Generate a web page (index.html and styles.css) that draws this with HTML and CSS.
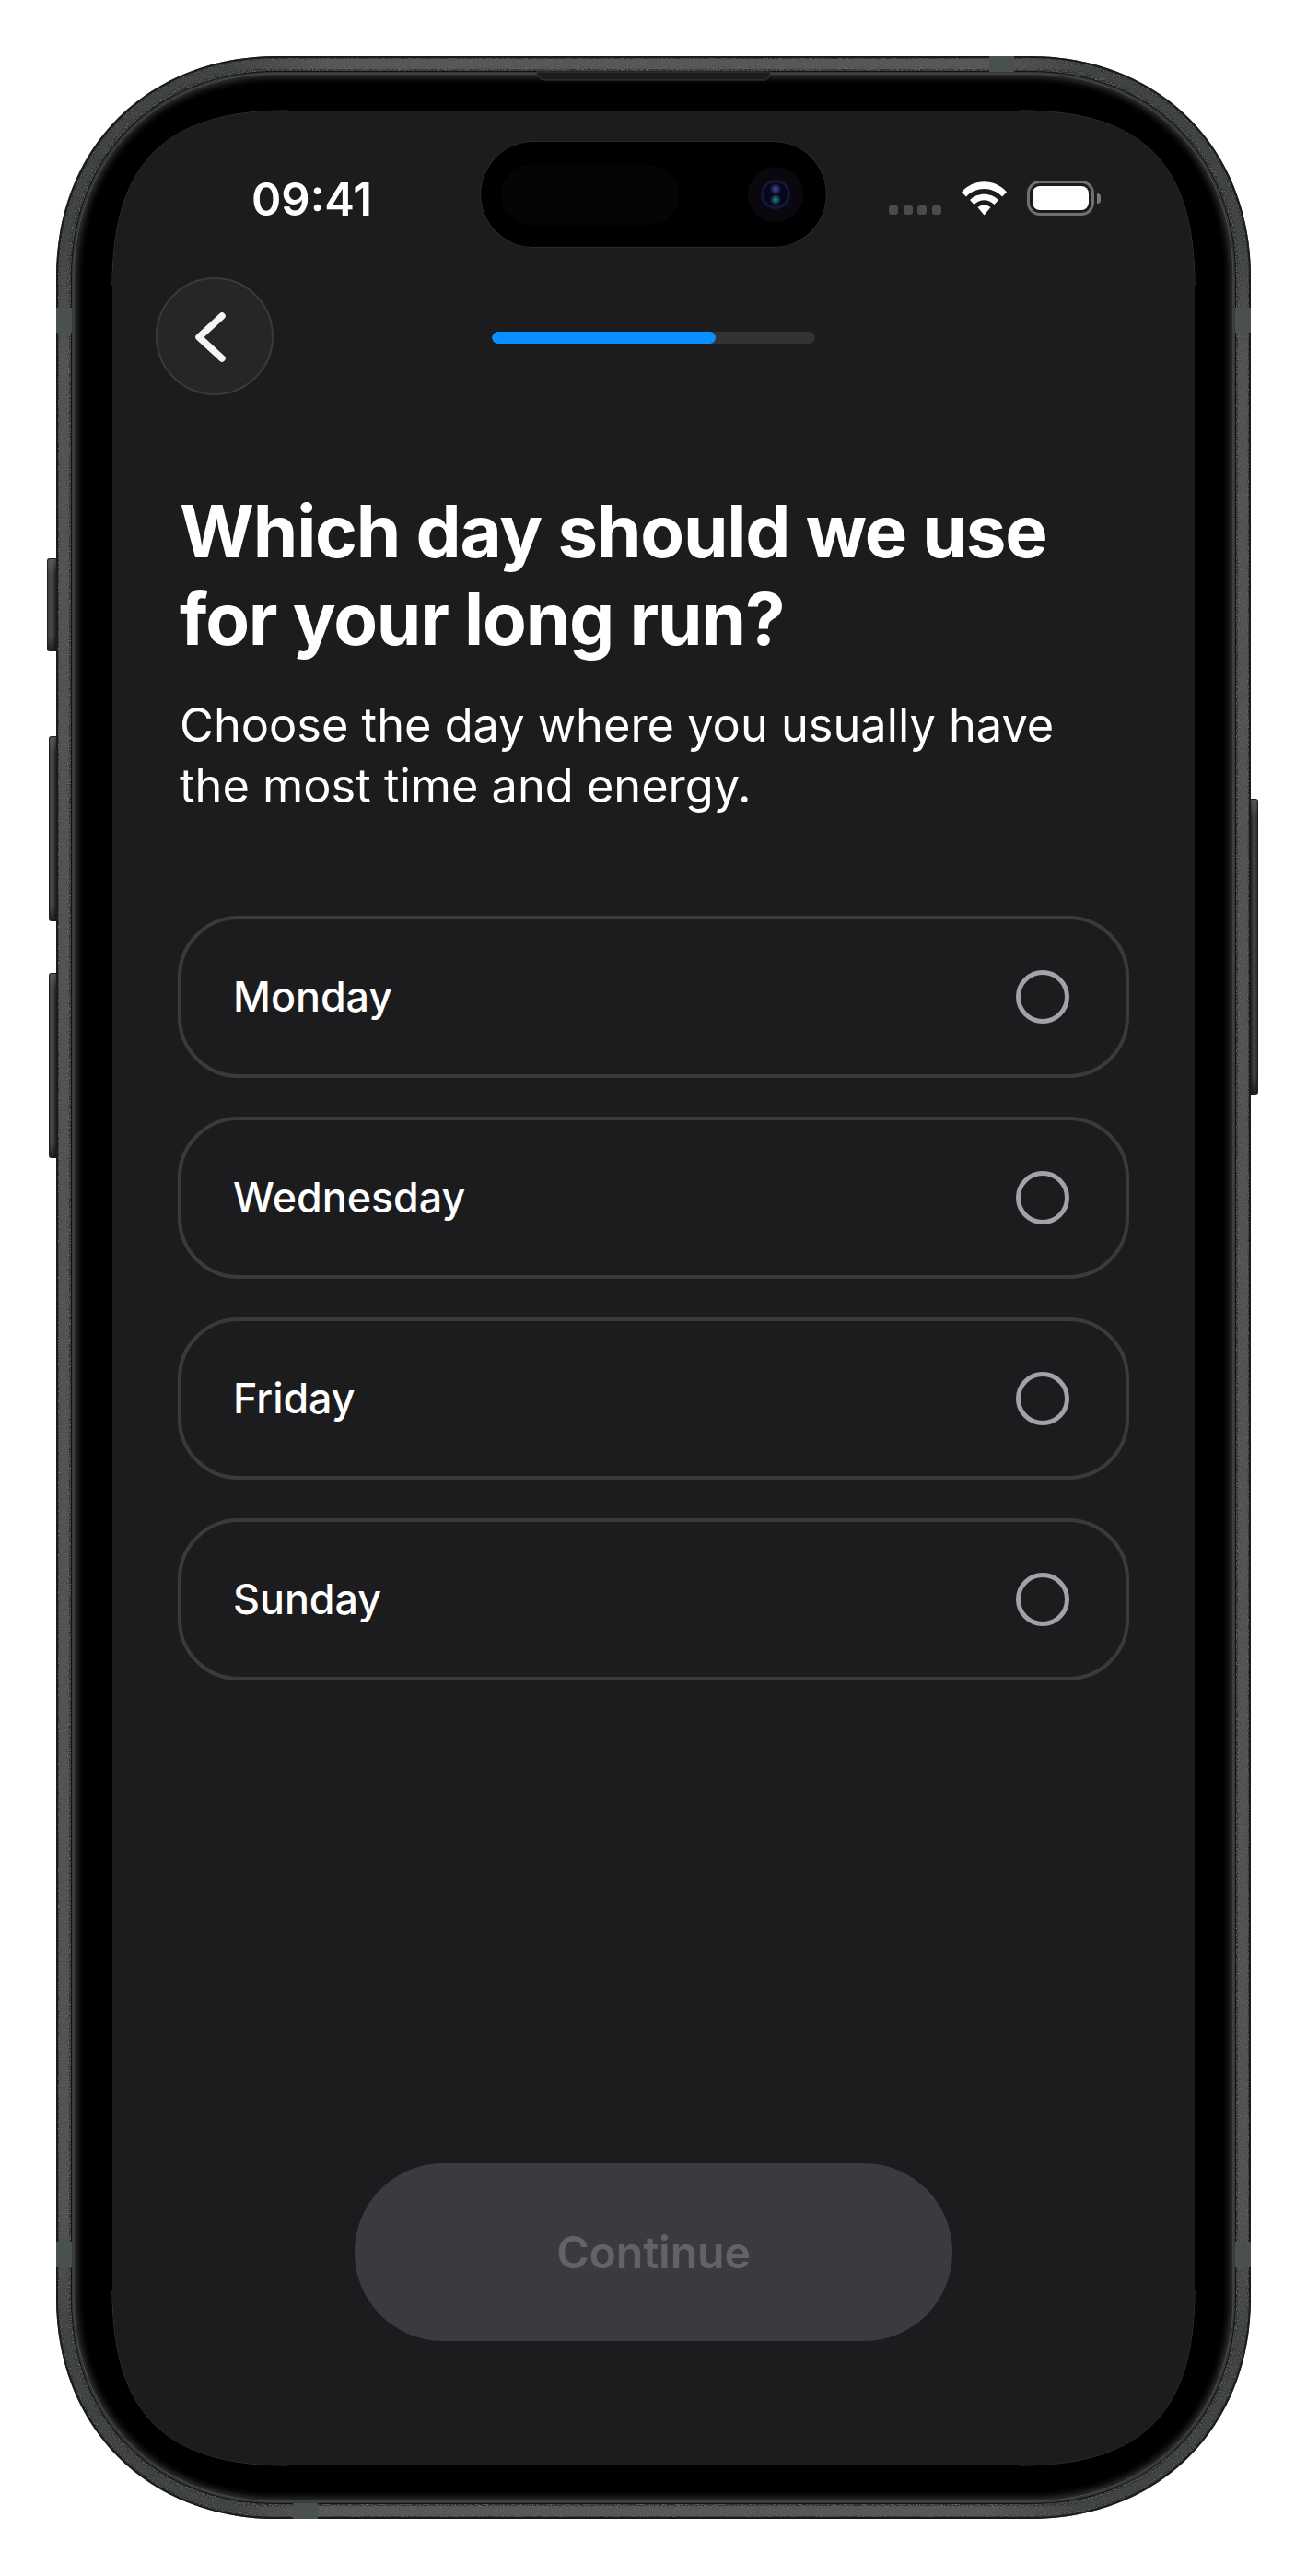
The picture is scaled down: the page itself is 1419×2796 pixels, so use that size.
FILE: index.html
```html
<!DOCTYPE html>
<html lang="en">
<head>
<meta charset="utf-8">
<title>Long run day</title>
<link rel="stylesheet" href="styles.css">
</head>
<body>
<div class="phone">
  <span class="side side-action"></span>
  <span class="side side-up"></span>
  <span class="side side-down"></span>
  <span class="side side-power"></span>
  <svg class="body-art" width="1297" height="2673" viewBox="0 0 1297 2673" aria-hidden="true">
    <defs>
      <filter id="grain" x="0" y="0" width="100%" height="100%" color-interpolation-filters="sRGB">
        <feTurbulence type="fractalNoise" baseFrequency="0.75" numOctaves="2" seed="7" result="n"/>
        <feColorMatrix in="n" type="matrix" values="0 0 0 0 1  0 0 0 0 1  0 0 0 0 1  0.9 0 0 0 -0.36" result="w"/>
        <feComposite in="w" in2="SourceAlpha" operator="in" result="g"/>
        <feMerge><feMergeNode in="SourceGraphic"/><feMergeNode in="g"/></feMerge>
      </filter>
      <filter id="soft" x="-2%" y="-2%" width="104%" height="104%"><feGaussianBlur stdDeviation="5"/></filter>
      <filter id="soft-band" x="-2%" y="-2%" width="104%" height="104%"><feGaussianBlur stdDeviation="2.500"/></filter>
      <clipPath id="inner-clip"><path d="M17,240 C17,108 108,17 240,17 H1057 C1189,17 1280,108 1280,240 V2433 C1280,2565 1189,2656 1057,2656 H240 C108,2656 17,2565 17,2433 Z"/></clipPath>
      <clipPath id="band-clip"><path clip-rule="evenodd" d="M0,240 C0,99 99,0 240,0 H1057 C1198,0 1297,99 1297,240 V2433 C1297,2574 1198,2673 1057,2673 H240 C99,2673 0,2574 0,2433 Z M17,240 C17,108 108,17 240,17 H1057 C1189,17 1280,108 1280,240 V2433 C1280,2565 1189,2656 1057,2656 H240 C108,2656 17,2565 17,2433 Z"/></clipPath>
      <linearGradient id="sheen-h" x1="0" x2="1" y1="0" y2="0">
        <stop offset="0" stop-color="#6c6c6c" stop-opacity="0"/><stop offset=".12" stop-color="#6c6c6c" stop-opacity=".5"/><stop offset=".88" stop-color="#6c6c6c" stop-opacity=".5"/><stop offset="1" stop-color="#6c6c6c" stop-opacity="0"/>
      </linearGradient>
      <linearGradient id="sheen-v" x1="0" x2="0" y1="0" y2="1">
        <stop offset="0" stop-color="#6c6c6c" stop-opacity="0"/><stop offset=".06" stop-color="#6c6c6c" stop-opacity=".4"/><stop offset=".94" stop-color="#6c6c6c" stop-opacity=".4"/><stop offset="1" stop-color="#6c6c6c" stop-opacity="0"/>
      </linearGradient>
    </defs>
    <path class="metal" filter="url(#grain)" fill-rule="evenodd" d="M0,240 C0,99 99,0 240,0 H1057 C1198,0 1297,99 1297,240 V2433 C1297,2574 1198,2673 1057,2673 H240 C99,2673 0,2574 0,2433 Z M17,240 C17,108 108,17 240,17 H1057 C1189,17 1280,108 1280,240 V2433 C1280,2565 1189,2656 1057,2656 H240 C108,2656 17,2565 17,2433 Z"/>
    <g clip-path="url(#band-clip)">
      <path class="band-light" filter="url(#soft-band)" d="M8,240 C8,104 104,8 240,8 H1057 C1193,8 1289,104 1289,240 V2433 C1289,2569 1193,2665 1057,2665 H240 C104,2665 8,2569 8,2433 Z"/>
    </g>
    <rect class="sheen" x="180" y="3" width="940" height="11"/>
    <rect class="sheen" x="180" y="2659" width="940" height="11"/>
    <rect class="sheen-side" x="3" y="190" width="11" height="2290"/>
    <rect class="sheen-side" x="1283" y="190" width="11" height="2290"/>
    <path class="rim" d="M1,240 C1,100 100,1 240,1 H1057 C1197,1 1296,100 1296,240 V2433 C1296,2573 1197,2672 1057,2672 H240 C100,2672 1,2573 1,2433 Z"/>
    <path class="bezel" d="M17,240 C17,108 108,17 240,17 H1057 C1189,17 1280,108 1280,240 V2433 C1280,2565 1189,2656 1057,2656 H240 C108,2656 17,2565 17,2433 Z"/>
    <g clip-path="url(#inner-clip)">
      <path class="glow" filter="url(#soft)" d="M17,240 C17,108 108,17 240,17 H1057 C1189,17 1280,108 1280,240 V2433 C1280,2565 1189,2656 1057,2656 H240 C108,2656 17,2565 17,2433 Z"/>
    </g>
    <path class="hairline" d="M19,240 C19,110 110,19 240,19 H1057 C1187,19 1278,110 1278,240 V2433 C1278,2563 1187,2654 1057,2654 H240 C110,2654 19,2563 19,2433 Z"/>
    <path class="speaker" d="M521,17 C523,22 525,26 531,26 H770 C772,26 774,22 776,17 Z"/>
    <rect class="band" x="1013" y="0" width="27" height="17"/>
    <rect class="band" x="257" y="2656" width="27" height="17"/>
    <rect class="band" x="0" y="273" width="17" height="27"/>
    <rect class="band" x="1280" y="273" width="17" height="27"/>
    <rect class="band" x="0" y="2373" width="17" height="27"/>
    <rect class="band" x="1280" y="2373" width="17" height="27"/>
    <path class="corner-line" d="M61,249 C61,116 118,59 251,59 M1046,59 C1179,59 1236,116 1236,249 M61,2425 C61,2558 118,2615 251,2615 M1046,2615 C1179,2615 1236,2558 1236,2425"/>
  </svg>

  <main class="screen">
    <header class="status">
      <span class="time">09:41</span>
      <div class="island">
        <span class="island-blob"></span>
        <span class="camera"><span class="lens"></span></span>
      </div>
      <div class="indicators">
        <span class="signal"><i></i><i></i><i></i><i></i></span>
        <svg class="wifi" width="49" height="37" viewBox="0 0 49 37" aria-hidden="true">
          <path d="M0,11.500 C13,-3.500 36,-3.500 49,11.500 L44,16.500 C33.500,5 15.500,5 5,16.500 Z"/>
          <path d="M9,20 C17,11.500 32,11.500 40,20 L35.500,25 C29,18.500 20,18.500 13.500,25 Z"/>
          <path d="M17.500,28 C21.500,24.500 27.500,24.500 31.500,28 L24.500,36.500 Z"/>
        </svg>
        <span class="battery"><span class="battery-fill"></span></span>
        <span class="battery-nub"></span>
      </div>
    </header>

    <nav class="nav">
      <button class="back" type="button" aria-label="Back">
        <svg width="44" height="64" viewBox="0 0 44 64" aria-hidden="true"><path d="M36,9 L11,32 L36,55"/></svg>
      </button>
      <div class="progress"><div class="progress-fill"></div></div>
    </nav>

    <section class="content">
      <h1 class="title">Which day should we use<br>for your long run?</h1>
      <p class="subtitle">Choose the day where you usually have<br>the most time and energy.</p>
      <div class="options">
        <label class="option"><span>Monday</span><span class="radio"></span></label>
        <label class="option"><span>Wednesday</span><span class="radio"></span></label>
        <label class="option"><span>Friday</span><span class="radio"></span></label>
        <label class="option"><span>Sunday</span><span class="radio"></span></label>
      </div>
    </section>

    <button class="continue" type="button" disabled>Continue</button>
  </main>
</div>
</body>
</html>
```
FILE: styles.css
```css
* { box-sizing: border-box; }
html, body { margin: 0; padding: 0; background: #fff; }
body { font-family: Inter, "Liberation Sans", sans-serif; overflow: hidden; height: 2796px; }

.phone {
  position: relative;
  width: 1297px;
  height: 2673px;
  margin: 61px auto 0;
  padding: 59px 61px 0;
}
.body-art { position: absolute; left: 0; top: 0; }
.metal { fill: #292b2b; }
.band-light { fill: none; stroke: #424545; stroke-width: 7; }
.sheen { fill: url(#sheen-h); }
.sheen-side { fill: url(#sheen-v); }
.rim { fill: none; stroke: #1a1c1c; stroke-width: 2; }
.bezel { fill: #000; stroke: #111212; stroke-width: 2; }
.glow { fill: none; stroke: #5a5a5a; stroke-width: 7; }
.hairline { fill: none; stroke: #4c4e4e; stroke-width: 1; }
.speaker { fill: #1b1c1c; stroke: #3a3b3b; stroke-width: 1; }
.band { fill: #4a4f50; }
.corner-line { fill: none; stroke: #4e4e50; stroke-width: .8; }

.side {
  position: absolute;
  background:
    linear-gradient(180deg, rgba(110,110,110,.5) 0, rgba(110,110,110,0) 16px, rgba(0,0,0,0) calc(100% - 16px), rgba(10,10,10,.6) 100%),
    linear-gradient(90deg, #3c3c3c 0, #4a4a4a 40%, #1f1f1f 100%);
  border: 1px solid #1e1e1e;
  border-right: 0;
  border-radius: 3px 0 0 3px;
}
.side-action { left: -10px; top: 545px; width: 10px; height: 101px; }
.side-up { left: -8px; top: 738px; width: 8px; height: 201px; }
.side-down { left: -8px; top: 995px; width: 8px; height: 201px; }
.side-power {
  right: -8px; top: 806px; width: 8px; height: 321px;
  background:
    linear-gradient(180deg, rgba(110,110,110,.5) 0, rgba(110,110,110,0) 20px, rgba(0,0,0,0) calc(100% - 20px), rgba(10,10,10,.6) 100%),
    linear-gradient(270deg, #2a2a2a 0, #4a4a4a 50%, #1f1f1f 100%);
  border: 1px solid #1e1e1e;
  border-left: 0;
  border-radius: 0 3px 3px 0;
}

.screen {
  position: relative;
  display: flex;
  flex-direction: column;
  width: 1175px;
  height: 2556px;
  background: #1c1c1e;
  color: #fff;
  clip-path: path("M0,190 C0,57 57,0 190,0 H985 C1118,0 1175,57 1175,190 V2366 C1175,2499 1118,2556 985,2556 H190 C57,2556 0,2499 0,2366 Z");
}

.status {
  display: grid;
  grid-template-columns: 400px 375px 1fr;
  padding-top: 34px;
  height: 148px;
}
.time {
  padding: 33px 0 0 151px;
  font-size: 49px;
  line-height: 60px;
  font-weight: 600;
}
.island {
  position: relative;
  display: flex;
  align-items: center;
  justify-content: space-between;
  height: 114px;
  padding: 0 25px 0 22px;
  background: #000;
  border-radius: 57px;
  box-shadow: 0 0 0 .5px #3c3c3e;
}
.island-blob { width: 193px; height: 65px; border-radius: 33px; background: #050505; }
.camera {
  display: flex; align-items: center; justify-content: center;
  width: 60px; height: 60px; border-radius: 50%;
  background: #0b070e;
}
.lens {
  width: 32px; height: 32px; border-radius: 50%;
  border: 3px solid #12183c;
  background:
    radial-gradient(circle at 50% 28%, #4c4aa8 0, rgba(76,74,168,0) 28%),
    radial-gradient(circle at 50% 72%, #1f8f8a 0, rgba(31,143,138,0) 26%),
    #06081a;
}
.indicators {
  position: relative;
  display: flex;
  align-items: flex-start;
  padding: 38px 0 0 68px;
}
.signal { display: flex; gap: 5.5px; margin-top: 31px; }
.signal i { display: block; width: 10px; height: 10px; border-radius: 3px; background: #4b4b4d; }
.wifi { margin: 5px 0 0 22px; fill: #fff; }
.battery {
  display: block;
  width: 73px; height: 38px;
  margin: 4px 0 0 22px;
  padding: 3px;
  border: 3px solid #707072;
  border-radius: 14px;
}
.battery-fill { display: block; width: 100%; height: 100%; background: #fff; border-radius: 8px; }
.battery-nub {
  width: 4px; height: 11px; margin: 18px 0 0 3px;
  background: #7a7a7c; border-radius: 0 4px 4px 0;
}

.nav {
  display: flex;
  align-items: center;
  padding-left: 47px;
  margin-top: 33px;
}
.back {
  display: flex; align-items: center; justify-content: center;
  width: 128px; height: 128px; padding: 0;
  background: #262628;
  border: 2.5px solid #3a3a3c;
  border-radius: 50%;
}
.back svg { margin: 2px 0 0 -12px; fill: none; stroke: #f5f5f5; stroke-width: 7.500; stroke-linecap: round; stroke-linejoin: round; }
.progress {
  width: 351px; height: 13px;
  margin: 2px 0 0 237px;
  background: #333335;
  border-radius: 7px;
  overflow: hidden;
}
.progress-fill { width: 243px; height: 100%; background: #0a8fff; border-radius: 7px; }

.content { flex: 1; padding: 100px 0 0 71px; }
.title {
  margin: 0 0 0 2px;
  font-size: 78px;
  line-height: 95px;
  font-weight: 700;
  letter-spacing: -1.17px;
}
.subtitle {
  margin: 35px 0 0 2px;
  font-size: 50.500px;
  line-height: 66px;
  font-weight: 400;
}
.options { display: flex; flex-direction: column; gap: 42px; width: 1033px; margin-top: 108px; }
.option {
  display: flex;
  align-items: center;
  justify-content: space-between;
  height: 176px;
  padding: 0 61px 0 56px;
  border: 4.500px solid #3a3a3c;
  border-radius: 66px;
  font-size: 44.800px;
  font-weight: 450;
}
.radio {
  width: 58px; height: 58px;
  border: 5px solid #a2a2a7;
  border-radius: 50%;
}

.continue {
  align-self: center;
  width: 649px;
  height: 193px;
  margin-bottom: 135px;
  background: #3a3a3f;
  border: 0;
  border-radius: 96px;
  color: #636367;
  font: 600 48px Inter, "Liberation Sans", sans-serif;
}
```
